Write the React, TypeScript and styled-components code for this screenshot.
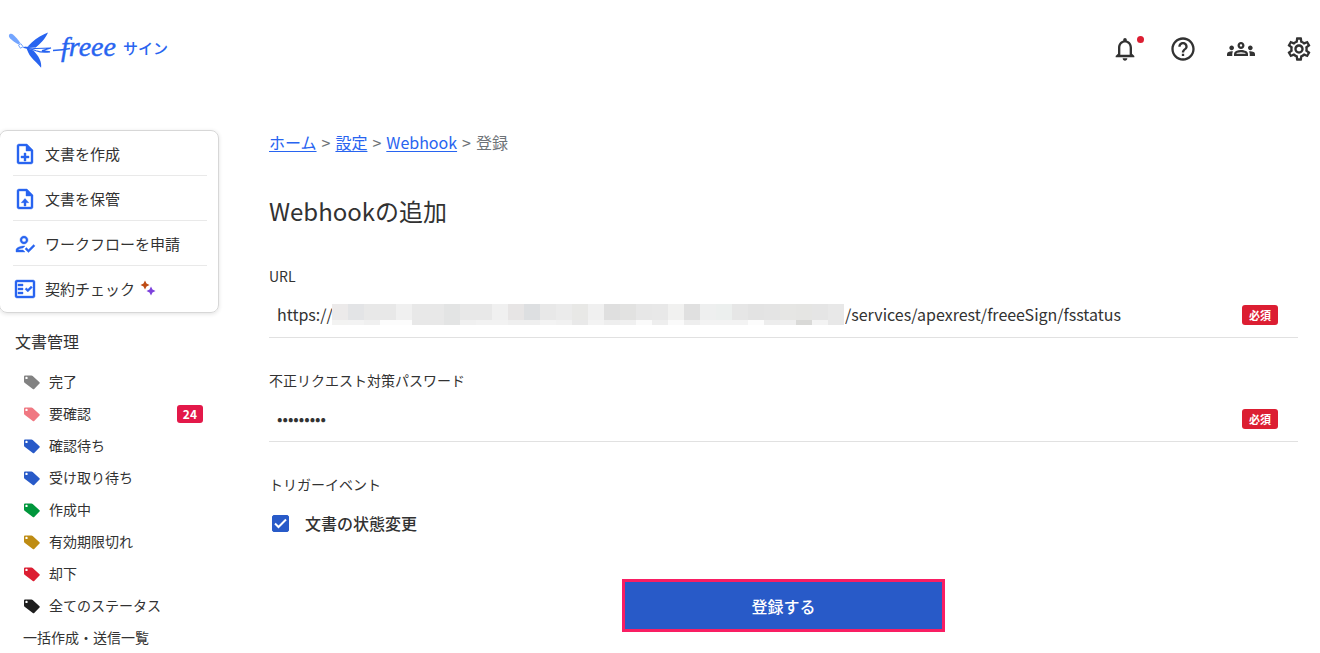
import React, { useState } from "react";
import styled, { createGlobalStyle } from "styled-components";
import {
  MdHelpOutline,
  MdOutlineFactCheck,
  MdOutlineGroups,
  MdOutlineHowToReg,
  MdOutlineNoteAdd,
  MdOutlineNotifications,
  MdOutlineSettings,
} from "react-icons/md";

const GlobalStyle = createGlobalStyle`
  *, *::before, *::after { box-sizing: border-box; }
  body {
    margin: 0;
    background: #fff;
    color: #323232;
    font-family: "Noto Sans CJK JP", "Noto Sans", sans-serif;
    font-size: 16px;
  }
  button, input { font: inherit; color: inherit; }
`;

const Header = styled.header`
  display: flex;
  align-items: center;
  justify-content: space-between;
  padding: 29px 7px 29px 8px;
`;

const LogoLink = styled.a`
  display: flex;
  color: #2864f0;
`;

const Tools = styled.nav`
  display: flex;
  gap: 30px;
`;

const ToolButton = styled.button`
  position: relative;
  display: flex;
  padding: 0;
  border: 0;
  background: none;
  font-size: 28px;
  color: #323232;
  cursor: pointer;
`;

const UnreadDot = styled.span`
  position: absolute;
  top: 1px;
  right: -5px;
  width: 7px;
  height: 7px;
  border-radius: 50%;
  background: #dc1e32;
`;

const Layout = styled.div`
  display: grid;
  grid-template-columns: 219px minmax(0, 1fr);
  column-gap: 50px;
  padding: 32px 22px 0 0;
`;

const Actions = styled.ul`
  list-style: none;
  margin: 0 0 0 -1px;
  padding: 0 11px 2px 13px;
  border: 1px solid #d7d7d7;
  border-radius: 8px;
  box-shadow: 0 1px 4px rgba(0, 0, 0, 0.12);
`;

const Action = styled.li`
  & + & { border-top: 1px solid #e9e9e9; }
`;

const ActionLink = styled.a`
  display: flex;
  align-items: center;
  gap: 8px;
  height: 44px;
  font-size: 15px;
  color: #323232;
  text-decoration: none;

  > svg:first-child {
    width: 24px;
    height: 24px;
    margin-top: 2px;
    color: #2864f0;
    stroke: none;
  }

  > svg:first-child path:not([fill="none"]) {
    stroke: #2864f0;
    stroke-width: 0.4;
  }
`;

const AiLabel = styled.span`
  display: flex;
  align-items: center;
  gap: 5px;
`;

const SectionTitle = styled.h2`
  margin: 16px 0 18px 15px;
  font-size: 16px;
  font-weight: 400;
  line-height: 24px;
`;

const StatusList = styled.ul`
  display: flex;
  flex-direction: column;
  gap: 12px;
  list-style: none;
  margin: 0;
  padding: 0 16px 0 23px;
`;

const StatusLink = styled.a`
  display: flex;
  align-items: center;
  gap: 8px;
  font-size: 14px;
  line-height: 20px;
  color: #323232;
  text-decoration: none;
`;

const Tag = styled.svg<{ $color: string }>`
  width: 18px;
  height: 16px;
  margin-top: 2px;
  fill: ${(p) => p.$color};
`;

const Count = styled.span`
  margin: 2px 0 0 auto;
  padding: 0 6px;
  border-radius: 3px;
  background: #e31849;
  color: #fff;
  font-size: 12px;
  font-weight: 700;
  line-height: 18px;
`;

const Breadcrumb = styled.nav`
  display: flex;
  gap: 5px;
  line-height: 24px;
  color: #6e7377;

  a {
    color: #2864f0;
    text-underline-offset: 2px;
  }
`;

const PageTitle = styled.h1`
  margin: 39px 0 37px;
  font-size: 24px;
  font-weight: 400;
  line-height: 36px;
`;

const Form = styled.form`
  display: flex;
  flex-direction: column;
  gap: 32px;
`;

const Field = styled.div`
  display: flex;
  flex-direction: column;
  gap: 6px;
`;

const FieldLabel = styled.label`
  font-size: 14px;
  line-height: 21px;
`;

const FieldRow = styled.div`
  display: flex;
  align-items: center;
  height: 45px;
  padding: 0 20px 0 8px;
  border-bottom: 1px solid #e1e1e1;
`;

const TextInput = styled.input<{ $width?: number }>`
  ${(p) => (p.$width ? `flex: none; width: ${p.$width}px;` : "flex: 1; min-width: 0;")}
  height: 36px;
  padding: 0 0 2px;
  border: 0;
  outline: 0;
  background: none;
`;

const Required = styled.span`
  padding: 0 7px;
  border-radius: 3px;
  background: #dc1e32;
  color: #fff;
  font-size: 11px;
  font-weight: 700;
  line-height: 20px;
`;

const Events = styled.fieldset`
  margin: 0;
  padding: 0;
  border: 0;
`;

const EventsTitle = styled.legend`
  margin-bottom: 16px;
  padding: 0;
  font-size: 14px;
  line-height: 21px;
`;

const CheckLabel = styled.label`
  display: flex;
  align-items: center;
  gap: 16px;
  padding-left: 3px;
  font-weight: 500;
  line-height: 24px;
`;

const CheckMark = styled.span`
  display: grid;
  width: 17px;
  height: 17px;

  > * { grid-area: 1 / 1; }
  svg { pointer-events: none; }
`;

const Checkbox = styled.input`
  appearance: none;
  width: 17px;
  height: 17px;
  margin: 0;
  border: 1px solid #285ac8;
  border-radius: 2px;

  &:checked { background: #285ac8; }
`;

const Submit = styled.button`
  align-self: center;
  width: 100%;
  max-width: 323px;
  height: 53px;
  margin-top: 12px;
  border: 3px solid #f91e63;
  background: #285ac8;
  color: #fff;
  font-weight: 500;
  cursor: pointer;
`;

const Logo = () => (
  <svg width="164" height="40" viewBox="8 29 164 40" role="img" aria-label="freee サイン">
    <path
      fill="#73a5ff"
      d="M9 35.200c.4-1.300 2.400-1.900 4-.7 2.300 1.800 5.200 5.300 7.300 8.400l-1.900 1.600c-3.100-1.900-6.600-4.300-8.400-6.300-.9-1-1.300-2-1-3z"
    />
    <path
      fill="none"
      stroke="#73a5ff"
      strokeWidth="1"
      d="M18.500 45.200l2.400-1.500 2.200 3-2.700 1.500zM23 47.500l3-.4"
    />
    <path fill="#2864f0" d="M48 32.500c-5 2.300-11.500 5.200-16.300 10-1.500 1.500-3 3-4.300 4.200l8.300.9c3.800-3.500 9.800-8.600 12.300-15.100z" />
    <path fill="#2864f0" d="M26.500 48.300c1.200 3 2.300 6.200 4.600 8.800 2.900 3.700 7 6.900 10 10.700.8-6.300-2.400-11.300-7.600-17.200z" />
    <path
      fill="none"
      stroke="#2864f0"
      strokeWidth="1.200"
      d="M24 47.500c4-1 8 .8 12 1l15-.5-9 2.600 8 1.200c-7 1-10 .4-14-1.100-4-1.700-7-1.700-11-3z"
    />
    <path fill="none" stroke="#2864f0" strokeWidth="1.300" d="M53 50.500c5-.2 10-.4 17-2" />
    <text
      x="61"
      y="56"
      fill="#2864f0"
      fontFamily="'Liberation Serif', serif"
      fontStyle="italic"
      fontSize="28"
      stroke="#2864f0"
      strokeWidth=".4"
    >
      freee
    </text>
    <text
      x="123"
      y="54"
      fill="#2864f0"
      fontFamily="'Noto Sans CJK JP', sans-serif"
      fontWeight="500"
      fontSize="15"
    >
      サイン
    </text>
  </svg>
);

const UploadDocument = () => (
  <svg viewBox="0 0 24 24" fill="currentColor" aria-hidden="true">
    <path d="M14 2H6c-1.100 0-1.990.9-1.990 2L4 20c0 1.100.89 2 1.990 2H18c1.100 0 2-.9 2-2V8l-6-6zm4 18H6V4h7v5h5v11z" />
    <path d="M12 11.500l-3.800 4.200H11V19h2v-3.300h2.800z" />
  </svg>
);

const Sparkles = () => (
  <svg width="16" height="16" viewBox="0 0 16 16" aria-hidden="true">
    <path fill="#be4b14" d="M5 0.500l1.500 3L9.500 5 6.500 6.500 5 9.500 3.500 6.500.5 5l3-1.500z" />
    <path fill="#7d41dc" d="M11 6.500l1.500 3 3 1.500-3 1.500-1.500 3-1.500-3-3-1.500 3-1.500z" />
  </svg>
);

const mosaicTop =
  "eceaea e3e4e6 e8e8e8 e8e8e8 f0f0f0 e8e8e8 e8e8e8 e3e4e4 e8e8e8 e8e8e8 f0f0f0 e7e5e5 dddfe1 e8e8e8 ebebeb e8e8e6 f0f0f0 dfdfdf e2e2e1 e7e7e7 e8e8e8 f1f1f0 e0e0e0 eeefef ecefee e6e6e6 e3e3e3 e4e4e4 e6e6e4 e5e5e3 e5e5e5 e8e8e8".split(" ");
const mosaicBottom =
  "f3f3f2 f3f3f3 f0f0f0 fcfcfc fcfcfc e8e8e8 e8e8e8 e3e4e4 f0f0f0 f2f2f2 f2f2f2 efefef efefef f3f3f3 f1f1f1 e9e9e9 f3f3f3 eeeeee f0f0f0 fafafa eeeeee fafafa eeeeee f3f3f3 f3f3f3 f3f3f3 fcfcfc ededed eeeeee d9d9d7 f3f3f3 e8e8e8".split(" ");

const Mosaic = styled.svg`
  flex: none;
  width: 512px;
  height: 21px;
  margin: 0 1px 1px 0;
`;

const MaskedHost = () => (
  <Mosaic viewBox="0 0 512 21" shapeRendering="crispEdges" aria-hidden="true">
    {mosaicTop.map((c, i) => (
      <rect key={i} x={i * 16} width="16" height="16" fill={`#${c}`} />
    ))}
    {mosaicBottom.map((c, i) => (
      <rect key={i} x={i * 16} y="16" width="16" height="5" fill={`#${c}`} />
    ))}
  </Mosaic>
);

const statuses = [
  { label: "完了", color: "#828282" },
  { label: "要確認", color: "#f07882", count: 24 },
  { label: "確認待ち", color: "#285ac8" },
  { label: "受け取り待ち", color: "#285ac8" },
  { label: "作成中", color: "#00963c" },
  { label: "有効期限切れ", color: "#be8c14" },
  { label: "却下", color: "#dc1e32" },
  { label: "全てのステータス", color: "#1e1e1e" },
];

export default function App() {
  const [scheme, setScheme] = useState("https://");
  const [path, setPath] = useState("/services/apexrest/freeeSign/fsstatus");
  const [password, setPassword] = useState("password1");
  const [checked, setChecked] = useState(true);

  return (
    <>
      <GlobalStyle />
      <Header>
        <LogoLink href="#home"><Logo /></LogoLink>
        <Tools>
          <ToolButton aria-label="通知"><MdOutlineNotifications /><UnreadDot /></ToolButton>
          <ToolButton aria-label="ヘルプ"><MdHelpOutline /></ToolButton>
          <ToolButton aria-label="メンバー"><MdOutlineGroups /></ToolButton>
          <ToolButton aria-label="設定"><MdOutlineSettings /></ToolButton>
        </Tools>
      </Header>
      <Layout>
        <aside>
          <Actions>
            <Action><ActionLink href="#create"><MdOutlineNoteAdd />文書を作成</ActionLink></Action>
            <Action><ActionLink href="#store"><UploadDocument />文書を保管</ActionLink></Action>
            <Action><ActionLink href="#workflow"><MdOutlineHowToReg />ワークフローを申請</ActionLink></Action>
            <Action>
              <ActionLink href="#check">
                <MdOutlineFactCheck />
                <AiLabel>契約チェック<Sparkles /></AiLabel>
              </ActionLink>
            </Action>
          </Actions>
          <SectionTitle>文書管理</SectionTitle>
          <StatusList>
            {statuses.map((s) => (
              <li key={s.label}>
                <StatusLink href="#documents">
                  <Tag viewBox="0 0 18 16" $color={s.color} aria-hidden="true">
                    <path
                      fillRule="evenodd"
                      d="M1 2.500q0-1 1-1h6.500q.7 0 1.200.5l6.800 6.200q.7.700 0 1.400l-5.300 5.300q-.7.700-1.400 0L1.600 8.700Q1 8.100 1 7.400zM3.500 2.700a1.200 1.200 0 1 0 0 2.400a1.200 1.200 0 1 0 0-2.400z"
                    />
                  </Tag>
                  {s.label}
                  {s.count && <Count>{s.count}</Count>}
                </StatusLink>
              </li>
            ))}
            <li><StatusLink href="#bulk">一括作成・送信一覧</StatusLink></li>
          </StatusList>
        </aside>
        <main>
          <Breadcrumb aria-label="パンくずリスト">
            <a href="#home">ホーム</a>
            <span>&gt;</span>
            <a href="#settings">設定</a>
            <span>&gt;</span>
            <a href="#webhook">Webhook</a>
            <span>&gt;</span>
            <span>登録</span>
          </Breadcrumb>
          <PageTitle>Webhookの追加</PageTitle>
          <Form onSubmit={(e) => e.preventDefault()}>
            <Field>
              <FieldLabel htmlFor="url">URL</FieldLabel>
              <FieldRow>
                <TextInput id="url" $width={55} value={scheme} onChange={(e) => setScheme(e.target.value)} />
                <MaskedHost />
                <TextInput aria-label="URLのパス" value={path} onChange={(e) => setPath(e.target.value)} />
                <Required>必須</Required>
              </FieldRow>
            </Field>
            <Field>
              <FieldLabel htmlFor="password">不正リクエスト対策パスワード</FieldLabel>
              <FieldRow>
                <TextInput
                  id="password"
                  type="password"
                  value={password}
                  onChange={(e) => setPassword(e.target.value)}
                />
                <Required>必須</Required>
              </FieldRow>
            </Field>
            <Events>
              <EventsTitle>トリガーイベント</EventsTitle>
              <CheckLabel>
                <CheckMark>
                  <Checkbox type="checkbox" checked={checked} onChange={(e) => setChecked(e.target.checked)} />
                  {checked && (
                    <svg width="17" height="17" viewBox="0 0 17 17" aria-hidden="true">
                      <path d="M3 8.500l3.500 3.500L14 4.500" fill="none" stroke="#fff" strokeWidth="2" />
                    </svg>
                  )}
                </CheckMark>
                文書の状態変更
              </CheckLabel>
            </Events>
            <Submit type="submit">登録する</Submit>
          </Form>
        </main>
      </Layout>
    </>
  );
}
